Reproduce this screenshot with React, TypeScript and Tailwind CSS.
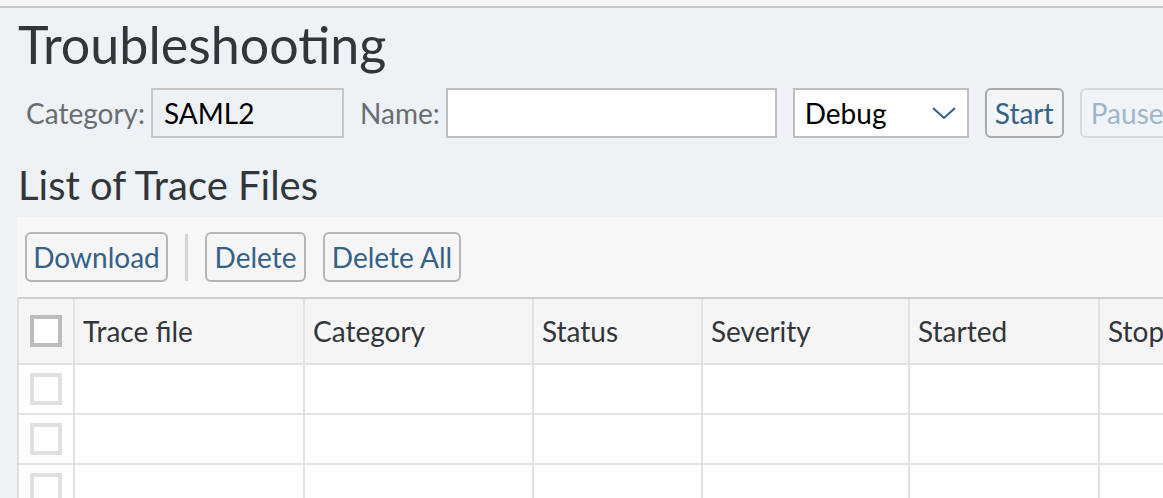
import React from 'react';

const columns = [
  { label: 'Trace file', w: 'w-[230px]' },
  { label: 'Category', w: 'w-[229px]' },
  { label: 'Status', w: 'w-[169px]' },
  { label: 'Severity', w: 'w-[207px]' },
  { label: 'Started', w: 'w-[190px]' },
  { label: 'Stopped', w: 'w-[200px]' },
];

const Checkbox = ({ header }: { header?: boolean }) => (
  <div
    className={`w-[32px] h-[32px] bg-white ${header ? 'border-4 border-[#bcbcbc]' : 'border-4 border-[#e0e0e0]'}`}
  />
);

const ToolButton = ({ children, w }: { children: React.ReactNode; w: string }) => (
  <button
    className={`${w} h-[50px] rounded-[6px] border-2 border-[#b5b5b5] bg-[#f5f5f5] text-[#346187] text-[28px] leading-none flex items-center justify-center`}
  >
    {children}
  </button>
);

export default function App() {
  return (
    <div className="w-[1163px] h-[498px] overflow-hidden bg-[#edf2f7] text-[#32363a]" style={{ fontFamily: 'Lato, "Noto Sans", sans-serif' }}>
      {/* top frame edge */}
      <div className="h-[8px] bg-[#f7f7f7] border-b-2 border-[#c8c8c8]" />

      <div className="pl-[18px]">
        <h1 className="text-[52px] leading-none mt-[10px] h-[60px] text-[#32363a]">Troubleshooting</h1>

        {/* trace controls */}
        <div className="flex items-center mt-[10px] h-[50px] whitespace-nowrap">
          <span className="ml-[8px] text-[28px] text-[#6a6d70]">Category:</span>
          <div className="ml-[6px] w-[193px] h-[50px] shrink-0 border-2 border-[#c6c6c6] bg-[#eef1f4] flex items-center px-[11px] text-[28px] text-black">
            SAML2
          </div>
          <span className="ml-[16px] text-[28px] text-[#6a6d70]">Name:</span>
          <input className="ml-[6px] w-[331px] h-[50px] shrink-0 border-2 border-[#bfbfbf] bg-white outline-none" />
          <div className="ml-[16px] w-[176px] h-[50px] shrink-0 border-2 border-[#bfbfbf] bg-white flex items-center justify-between pl-[10px] pr-[10px] text-[28px] text-black">
            <span>Debug</span>
            <svg width="26" height="16" viewBox="0 0 26 16" fill="none">
              <path d="M2 3 L13 13 L24 3" stroke="#346187" strokeWidth="2" />
            </svg>
          </div>
          <button className="ml-[16px] w-[79px] h-[50px] shrink-0 rounded-[6px] border-2 border-[#aaaaaa] bg-[#f2f4f6] text-[28px] text-[#346187] flex items-center justify-center">
            Start
          </button>
          <button className="ml-[16px] w-[100px] h-[50px] shrink-0 rounded-[6px] border-2 border-[#d6dadd] bg-[#f1f4f7] text-[28px] text-[#9fb5c8] flex items-center justify-start pl-[9px]">
            Pause
          </button>
        </div>

        <h2 className="text-[40px] leading-none mt-[27px] text-[#32363a]">List of Trace Files</h2>

        {/* trace file list */}
        <div className="mt-[12px] ml-[-1px] bg-[#f7f7f7]">
          <div className="h-[80px] flex items-center pl-[8px] gap-[17px]">
            <ToolButton w="w-[143px]">Download</ToolButton>
            <div className="w-[3px] h-[47px] bg-[#d2d6da]" />
            <ToolButton w="w-[101px]">Delete</ToolButton>
            <ToolButton w="w-[138px]">Delete All</ToolButton>
          </div>

          <div className="border-t-2 border-[#cfcfcf] border-l-2 border-l-[#e0e0e0] w-[1300px]">
            <div className="flex h-[66px] bg-[#f5f5f5] border-b-2 border-[#e2e2e2]">
              <div className="w-[54px] flex items-center justify-center shrink-0">
                <Checkbox header />
              </div>
              {columns.map((c) => (
                <div key={c.label} className={`${c.w} shrink-0 border-l-2 border-[#e2e2e2] flex items-center pl-[8px] text-[28px] text-[#32363a]`}>
                  {c.label}
                </div>
              ))}
            </div>
            {[0, 1, 2].map((r) => (
              <div key={r} className="flex h-[50px] bg-white border-b-2 border-[#e2e2e2]">
                <div className="w-[54px] flex items-center justify-center shrink-0">
                  <Checkbox />
                </div>
                {columns.map((c) => (
                  <div key={c.label} className={`${c.w} shrink-0 border-l-2 border-[#e2e2e2]`} />
                ))}
              </div>
            ))}
          </div>
        </div>
      </div>
    </div>
  );
}
